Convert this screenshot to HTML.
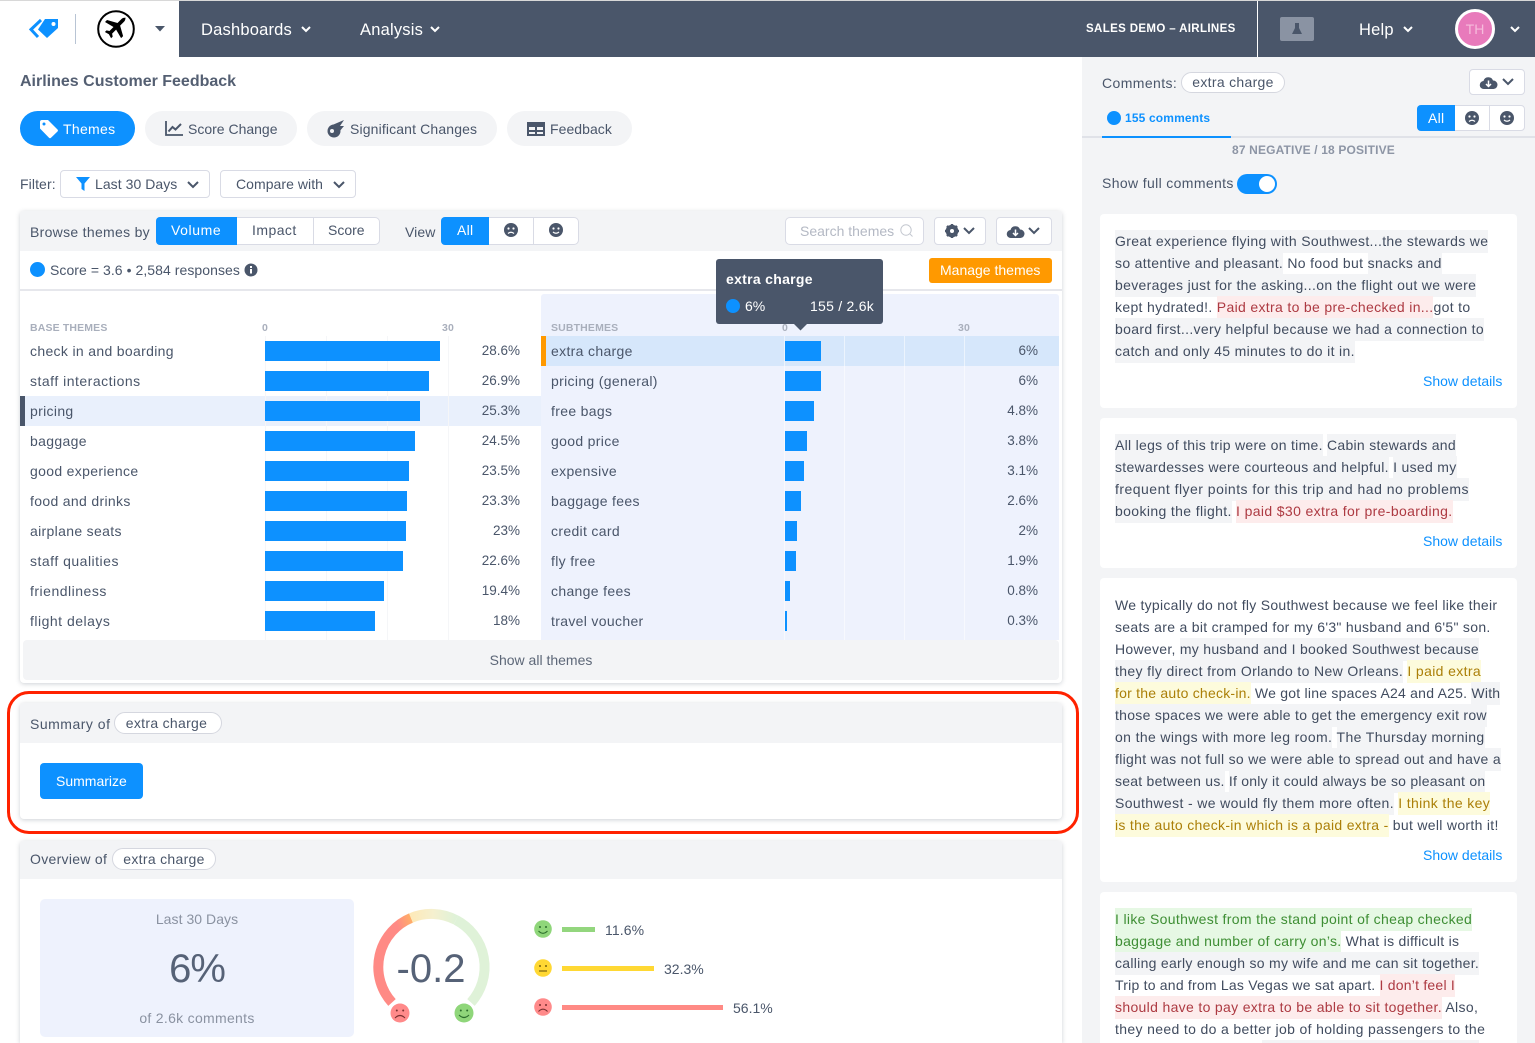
<!DOCTYPE html>
<html lang="en">
<head>
<meta charset="utf-8">
<title>Airlines Customer Feedback</title>
<style>
*{box-sizing:border-box}
html{margin:0;padding:0;width:1535px;height:1043px;overflow:hidden}
body{margin:0;padding:0;position:relative;width:1535px;height:1043px;overflow:hidden;background:#fff;font-family:"Liberation Sans",sans-serif;font-size:14px;color:#4a566a}
.a{position:absolute}
.t{position:absolute;white-space:nowrap;line-height:20px;letter-spacing:.3px}
.h{letter-spacing:0}
.pill{position:absolute;height:35px;border-radius:18px;background:#f3f4f6;top:111px}
.box{position:absolute;background:#fff;border:1px solid #d9dbe5;border-radius:4px}
.card{position:absolute;left:20px;width:1042px;background:#fff;border-radius:4px;box-shadow:0 1px 5px rgba(60,70,90,.25)}
.hd{position:absolute;left:0;top:0;width:100%;background:#f3f4f6;border-radius:4px 4px 0 0}
.tag{position:absolute;background:#fff;border:1px solid #d5d7df;border-radius:12px;text-align:center;line-height:20px;letter-spacing:.3px;white-space:nowrap}
.bar{position:absolute;height:20px;background:#0d91ff}
.rl{position:absolute;white-space:nowrap;line-height:20px;letter-spacing:.33px}
.pc{position:absolute;width:60px;text-align:right;line-height:20px;font-size:13.5px;letter-spacing:0}
.cap{position:absolute;font-size:10.5px;font-weight:bold;color:#a9afbc;line-height:14px;letter-spacing:.15px;white-space:nowrap}
.cc{position:absolute;left:1100px;width:417px;background:#fff;border-radius:4px}
.l{position:absolute;left:1115px;height:23px;line-height:22px;white-space:nowrap;letter-spacing:.33px;color:#414c5f}
.l span{display:inline-block;height:23px;vertical-align:top}
.g{background:#f3f4f6}
.r{background:#fdecec;color:#ad3a42}
.y{background:#fdfbdc;color:#ab7f08}
.n{background:#e6f8e4;color:#3e8e34}
.sd{position:absolute;left:1423px;color:#0d91ff;line-height:20px;white-space:nowrap}
svg{position:absolute;display:block;overflow:visible}
.v{position:absolute;width:1px;background:rgba(255,255,255,.55)}
</style>
</head>
<body>
<!-- top nav -->
<div class="a" style="left:0;top:0;width:1535px;height:1px;background:#d8d8d8"></div>
<div class="a" style="left:179px;top:1px;width:1356px;height:56px;background:#4a566a"></div>
<svg style="left:30px;top:18px" width="29" height="22" viewBox="0 0 29 22"><path d="M11 2 L1 11.500 L8 19" fill="none" stroke="#0d91ff" stroke-width="3"/><path d="M15 1 H28 V10 L17 20 L8 11.500 Z" fill="#0d91ff"/><circle cx="23.500" cy="6" r="2" fill="#fff"/></svg>
<div class="a" style="left:75px;top:14px;width:1px;height:30px;background:#b8c4d4"></div>
<svg style="left:97px;top:10px" width="38" height="38" viewBox="0 0 38 38"><circle cx="19" cy="19" r="17.800" fill="#fff" stroke="#000" stroke-width="2"/><path d="M29 8.500c-1.200-1.200-3.200-.8-4.500.5l-4 4-10.500-3-2 2 8.500 5-4 4-3-.6-1.600 1.600 4 2.200 2.200 4 1.600-1.600-.6-3 4-4 5 8.500 2-2-3-10.500 4-4c1.300-1.300 1.700-3.300 .9-4.600z" fill="#000"/></svg>
<svg style="left:155px;top:26px" width="10" height="6"><path d="M0 0H10L5 5.500Z" fill="#4a566a"/></svg>
<div class="t" style="left:201px;top:20px;font-size:16.500px;color:#fff;letter-spacing:.2px">Dashboards</div>
<svg style="left:301px;top:26px" width="10" height="7"><path d="M1 1L5 5L9 1" fill="none" stroke="#fff" stroke-width="2"/></svg>
<div class="t" style="left:360px;top:20px;font-size:16.500px;color:#fff;letter-spacing:.2px">Analysis</div>
<svg style="left:430px;top:26px" width="10" height="7"><path d="M1 1L5 5L9 1" fill="none" stroke="#fff" stroke-width="2"/></svg>
<div class="t" style="left:1086px;top:19px;font-size:11.500px;font-weight:bold;color:#fff;letter-spacing:.36px">SALES DEMO – AIRLINES</div>
<div class="a" style="left:1257px;top:1px;width:1px;height:56px;background:#fff"></div>
<div class="a" style="left:1280px;top:17px;width:34px;height:24px;background:#8a93a3;border-radius:2px"></div>
<svg style="left:1292px;top:23px" width="10" height="12"><path d="M3 0H7V5L10 11H0L3 5Z" fill="#4a566a"/></svg>
<div class="t" style="left:1359px;top:20px;font-size:16.500px;color:#fff;letter-spacing:.2px">Help</div>
<svg style="left:1403px;top:26px" width="10" height="7"><path d="M1 1L5 5L9 1" fill="none" stroke="#fff" stroke-width="2"/></svg>
<div class="a" style="left:1455px;top:9px;width:40px;height:40px;border-radius:50%;background:#e87abb;border:3px solid #fff;color:#f6bcdc;text-align:center;line-height:34px;font-size:14px">TH</div>
<svg style="left:1510px;top:26px" width="10" height="7"><path d="M1 1L5 5L9 1" fill="none" stroke="#fff" stroke-width="2"/></svg>

<!-- page heading -->
<div class="t" style="left:20px;top:71px;font-size:16px;font-weight:bold;color:#545f72;letter-spacing:0;top:72px">Airlines Customer Feedback</div>

<!-- tabs -->
<div class="pill" style="left:20px;width:115px;background:#0d91ff"></div>
<svg style="left:40px;top:120px" width="18" height="18" viewBox="0 0 18 18"><path d="M0 2a2 2 0 0 1 2-2H8L17.500 9.500a1.500 1.500 0 0 1 0 2L11 17.800a1.500 1.500 0 0 1-2 0L0 8.500Z" fill="#fff"/><circle cx="4" cy="4" r="1.500" fill="#0d91ff"/></svg>
<div class="t" style="left:63px;top:119px;color:#fff">Themes</div>
<div class="pill" style="left:145px;width:152px"></div>
<svg style="left:165px;top:121px" width="18" height="15" viewBox="0 0 18 15"><path d="M1 0V14H18" fill="none" stroke="#4a566a" stroke-width="1.800"/><path d="M3.500 10.500L7.500 6L10.500 8.500L16 3" fill="none" stroke="#4a566a" stroke-width="2"/></svg>
<div class="t" style="left:188px;top:119px;letter-spacing:0">Score Change</div>
<div class="pill" style="left:307px;width:190px"></div>
<svg style="left:327px;top:120px" width="18" height="18" viewBox="0 0 18 18"><circle cx="7" cy="11" r="6.500" fill="#4a566a"/><path d="M3 6L17 0L13 6L17 6L12 12Z" fill="#4a566a"/><circle cx="5" cy="11" r="2" fill="#f3f4f6"/></svg>
<div class="t" style="left:350px;top:119px;letter-spacing:.14px">Significant Changes</div>
<div class="pill" style="left:507px;width:125px"></div>
<svg style="left:527px;top:122px" width="18" height="14" viewBox="0 0 18 14"><path d="M0 0H18V14H0Z" fill="#4a566a"/><path d="M2 5H8V8H2ZM10 5H16V8H10ZM2 10H8V12H2ZM10 10H16V12H10Z" fill="#f3f4f6"/></svg>
<div class="t" style="left:550px;top:119px;letter-spacing:.05px">Feedback</div>

<!-- filter -->
<div class="t" style="left:20px;top:174px;letter-spacing:.1px">Filter:</div>
<div class="box" style="left:60px;top:170px;width:150px;height:28px"></div>
<svg style="left:76px;top:177px" width="14" height="14" viewBox="0 0 14 14"><path d="M0 0H14L8.500 6.500V14L5.500 12V6.500Z" fill="#0d91ff"/></svg>
<div class="t" style="left:95px;top:174px;letter-spacing:.05px">Last 30 Days</div>
<svg style="left:187px;top:181px" width="12" height="8"><path d="M1 1L6 6L11 1" fill="none" stroke="#4a566a" stroke-width="2"/></svg>
<div class="box" style="left:220px;top:170px;width:136px;height:28px"></div>
<div class="t" style="left:236px;top:174px;letter-spacing:.05px">Compare with</div>
<svg style="left:333px;top:181px" width="12" height="8"><path d="M1 1L6 6L11 1" fill="none" stroke="#4a566a" stroke-width="2"/></svg>

<!-- themes card -->
<div class="card" style="top:211px;height:472px"></div>
<div class="hd" style="left:20px;top:211px;width:1042px;height:40px"></div>
<div class="t" style="left:30px;top:222px">Browse themes by</div>
<div class="box" style="left:156px;top:217px;width:224px;height:28px;border-radius:5px"></div>
<div class="a" style="left:156px;top:217px;width:81px;height:28px;background:#0d91ff;border-radius:4px 0 0 4px"></div>
<div class="a" style="left:313px;top:217px;width:1px;height:28px;background:#d9dbe5"></div>
<div class="t" style="left:171px;top:220px;color:#fff;letter-spacing:.6px">Volume</div>
<div class="t" style="left:252px;top:220px;letter-spacing:.45px">Impact</div>
<div class="t" style="left:328px;top:220px;letter-spacing:0">Score</div>
<div class="t" style="left:405px;top:222px;letter-spacing:.1px">View</div>
<div class="box" style="left:441px;top:217px;width:138px;height:28px;border-radius:5px"></div>
<div class="a" style="left:441px;top:217px;width:48px;height:28px;background:#0d91ff;border-radius:4px 0 0 4px"></div>
<div class="a" style="left:533px;top:217px;width:1px;height:28px;background:#d9dbe5"></div>
<div class="t" style="left:457px;top:220px;color:#fff">All</div>
<svg style="left:504px;top:223px" width="14" height="14" viewBox="0 0 14 14"><circle cx="7" cy="7" r="7" fill="#4a566a"/><circle cx="4.500" cy="5.500" r="1.100" fill="#fff"/><circle cx="9.500" cy="5.500" r="1.100" fill="#fff"/><path d="M4 10.500Q7 8 10 10.500" fill="none" stroke="#fff" stroke-width="1.200"/></svg>
<svg style="left:549px;top:223px" width="14" height="14" viewBox="0 0 14 14"><circle cx="7" cy="7" r="7" fill="#4a566a"/><circle cx="4.500" cy="5.500" r="1.100" fill="#fff"/><circle cx="9.500" cy="5.500" r="1.100" fill="#fff"/><path d="M4 9Q7 11.500 10 9" fill="none" stroke="#fff" stroke-width="1.200"/></svg>
<div class="box" style="left:785px;top:217px;width:139px;height:28px;border-radius:5px"></div>
<div class="t h" style="left:800px;top:221px;color:#b4b9c4">Search themes</div>
<svg style="left:900px;top:224px" width="13" height="13" viewBox="0 0 13 13"><circle cx="6" cy="6" r="5.200" fill="none" stroke="#c4c8d0" stroke-width="1"/><path d="M10 10L12.500 12.500" stroke="#c4c8d0"/></svg>
<div class="box" style="left:934px;top:217px;width:52px;height:28px"></div>
<svg style="left:945px;top:224px" width="14" height="14" viewBox="0 0 14 14"><circle cx="7" cy="7" r="4.800" fill="none" stroke="#4a566a" stroke-width="3"/><path d="M7 0V14M0 7H14M2 2L12 12M12 2L2 12" stroke="#4a566a" stroke-width="2.400"/><circle cx="7" cy="7" r="2" fill="#fff"/></svg>
<svg style="left:963px;top:227px" width="12" height="8"><path d="M1 1L6 6L11 1" fill="none" stroke="#4a566a" stroke-width="2"/></svg>
<div class="box" style="left:996px;top:217px;width:56px;height:28px"></div>
<svg style="left:1007px;top:225px" width="17" height="13" viewBox="0 0 17 13"><path d="M4 13A4 4 0 0 1 3.500 5 5 5 0 0 1 13 4.500 4.200 4.200 0 0 1 13.500 13Z" fill="#4a566a"/><path d="M8.500 4.500V10M6 8L8.500 10.500L11 8" fill="none" stroke="#fff" stroke-width="1.500"/></svg>
<svg style="left:1028px;top:227px" width="12" height="8"><path d="M1 1L6 6L11 1" fill="none" stroke="#4a566a" stroke-width="2"/></svg>

<div class="a" style="left:30px;top:262px;width:15px;height:15px;border-radius:50%;background:#0d91ff"></div>
<div class="t" style="left:50px;top:260px;letter-spacing:.06px">Score = 3.6 • 2,584 responses</div>
<svg style="left:244px;top:263px" width="14" height="14" viewBox="0 0 14 14"><circle cx="7" cy="7" r="6.500" fill="#4a566a"/><rect x="6" y="6" width="2" height="4.500" fill="#fff"/><rect x="6" y="3" width="2" height="2" fill="#fff"/></svg>
<div class="a" style="left:20px;top:289px;width:1042px;height:2px;background:#e6e7ec"></div>
<div class="a" style="left:929px;top:258px;width:123px;height:25px;background:#ff9900;border-radius:3px"></div>
<div class="t h" style="left:940px;top:260px;color:#fff">Manage themes</div>

<!-- left chart -->
<div class="a" style="left:20px;top:396px;width:521px;height:30px;background:#e9f0fc"></div>
<div class="a" style="left:20px;top:396px;width:5px;height:30px;background:#4a566a"></div>
<div class="a" style="left:265px;top:336px;width:1px;height:304px;background:#f5f6f8"></div>
<div class="a" style="left:326px;top:336px;width:1px;height:304px;background:#f5f6f8"></div>
<div class="a" style="left:387px;top:336px;width:1px;height:304px;background:#f5f6f8"></div>
<div class="a" style="left:448px;top:336px;width:1px;height:304px;background:#f5f6f8"></div>
<div class="cap" style="left:30px;top:321px">BASE THEMES</div>
<div class="cap" style="left:262px;top:321px">0</div>
<div class="cap" style="left:442px;top:321px">30</div>
<div class="rl" style="left:30px;top:341px">check in and boarding</div>
<div class="rl" style="left:30px;top:371px;letter-spacing:.5px">staff interactions</div>
<div class="rl" style="left:30px;top:401px">pricing</div>
<div class="rl" style="left:30px;top:431px">baggage</div>
<div class="rl" style="left:30px;top:461px">good experience</div>
<div class="rl" style="left:30px;top:491px">food and drinks</div>
<div class="rl" style="left:30px;top:521px">airplane seats</div>
<div class="rl" style="left:30px;top:551px;letter-spacing:.5px">staff qualities</div>
<div class="rl" style="left:30px;top:581px;letter-spacing:.5px">friendliness</div>
<div class="rl" style="left:30px;top:611px;letter-spacing:.5px">flight delays</div>
<div class="bar" style="left:265px;top:341px;width:175px"></div>
<div class="bar" style="left:265px;top:371px;width:164px"></div>
<div class="bar" style="left:265px;top:401px;width:155px"></div>
<div class="bar" style="left:265px;top:431px;width:150px"></div>
<div class="bar" style="left:265px;top:461px;width:144px"></div>
<div class="bar" style="left:265px;top:491px;width:142px"></div>
<div class="bar" style="left:265px;top:521px;width:141px"></div>
<div class="bar" style="left:265px;top:551px;width:138px"></div>
<div class="bar" style="left:265px;top:581px;width:119px"></div>
<div class="bar" style="left:265px;top:611px;width:110px"></div>
<div class="pc" style="left:460px;top:341px">28.6%</div>
<div class="pc" style="left:460px;top:371px">26.9%</div>
<div class="pc" style="left:460px;top:401px">25.3%</div>
<div class="pc" style="left:460px;top:431px">24.5%</div>
<div class="pc" style="left:460px;top:461px">23.5%</div>
<div class="pc" style="left:460px;top:491px">23.3%</div>
<div class="pc" style="left:460px;top:521px">23%</div>
<div class="pc" style="left:460px;top:551px">22.6%</div>
<div class="pc" style="left:460px;top:581px">19.4%</div>
<div class="pc" style="left:460px;top:611px">18%</div>

<!-- right chart -->
<div class="a" style="left:541px;top:294px;width:518px;height:346px;background:#eef2fd;border-radius:3px 3px 0 0"></div>
<div class="a" style="left:541px;top:336px;width:518px;height:30px;background:#d6e7fb"></div>
<div class="a" style="left:541px;top:336px;width:5px;height:30px;background:#ff9900"></div>
<div class="v" style="left:784px;top:336px;height:304px"></div>
<div class="v" style="left:844px;top:336px;height:304px"></div>
<div class="v" style="left:904px;top:336px;height:304px"></div>
<div class="v" style="left:964px;top:336px;height:304px"></div>
<div class="cap" style="left:551px;top:321px">SUBTHEMES</div>
<div class="cap" style="left:782px;top:321px">0</div>
<div class="cap" style="left:958px;top:321px">30</div>
<div class="rl" style="left:551px;top:341px">extra charge</div>
<div class="rl" style="left:551px;top:371px">pricing (general)</div>
<div class="rl" style="left:551px;top:401px">free bags</div>
<div class="rl" style="left:551px;top:431px">good price</div>
<div class="rl" style="left:551px;top:461px">expensive</div>
<div class="rl" style="left:551px;top:491px">baggage fees</div>
<div class="rl" style="left:551px;top:521px">credit card</div>
<div class="rl" style="left:551px;top:551px">fly free</div>
<div class="rl" style="left:551px;top:581px">change fees</div>
<div class="rl" style="left:551px;top:611px">travel voucher</div>
<div class="bar" style="left:785px;top:341px;width:36px"></div>
<div class="bar" style="left:785px;top:371px;width:36px"></div>
<div class="bar" style="left:785px;top:401px;width:29px"></div>
<div class="bar" style="left:785px;top:431px;width:22px"></div>
<div class="bar" style="left:785px;top:461px;width:19px"></div>
<div class="bar" style="left:785px;top:491px;width:16px"></div>
<div class="bar" style="left:785px;top:521px;width:12px"></div>
<div class="bar" style="left:785px;top:551px;width:11px"></div>
<div class="bar" style="left:785px;top:581px;width:5px"></div>
<div class="bar" style="left:785px;top:611px;width:2px"></div>
<div class="pc" style="left:978px;top:341px">6%</div>
<div class="pc" style="left:978px;top:371px">6%</div>
<div class="pc" style="left:978px;top:401px">4.8%</div>
<div class="pc" style="left:978px;top:431px">3.8%</div>
<div class="pc" style="left:978px;top:461px">3.1%</div>
<div class="pc" style="left:978px;top:491px">2.6%</div>
<div class="pc" style="left:978px;top:521px">2%</div>
<div class="pc" style="left:978px;top:551px">1.9%</div>
<div class="pc" style="left:978px;top:581px">0.8%</div>
<div class="pc" style="left:978px;top:611px">0.3%</div>

<!-- tooltip -->
<div class="a" style="left:716px;top:259px;width:167px;height:65px;background:#4a566a;border-radius:3px"></div>
<svg style="left:794px;top:324px" width="13" height="7"><path d="M0 0H13L6.500 6.500Z" fill="#4a566a"/></svg>
<div class="t" style="left:726px;top:269px;color:#fff;font-weight:bold;letter-spacing:.3px">extra charge</div>
<div class="a" style="left:726px;top:299px;width:14px;height:14px;border-radius:50%;background:#0d91ff"></div>
<div class="t" style="left:745px;top:296px;color:#fff;letter-spacing:0">6%</div>
<div class="t" style="left:810px;top:296px;color:#fff;letter-spacing:.25px">155 / 2.6k</div>

<div class="a" style="left:23px;top:640px;width:1036px;height:40px;background:#f3f4f6;border-radius:4px"></div>
<div class="t h" style="left:23px;top:650px;width:1036px;text-align:center;color:#5d6778">Show all themes</div>

<!-- red outline -->
<div class="a" style="left:7px;top:691px;width:1072px;height:143px;border:3px solid #ff2200;border-radius:22px"></div>

<!-- summary card -->
<div class="card" style="top:703px;height:116px"></div>
<div class="hd" style="left:20px;top:703px;width:1042px;height:40px"></div>
<div class="t" style="left:30px;top:714px;letter-spacing:.5px">Summary of</div>
<div class="tag" style="left:114px;top:712px;width:108px;height:22px;padding-right:3px">extra charge</div>
<div class="a" style="left:40px;top:763px;width:103px;height:36px;background:#0d91ff;border-radius:4px"></div>
<div class="t h" style="left:56px;top:771px;color:#fff">Summarize</div>

<!-- overview card -->
<div class="card" style="top:841px;height:202px;border-radius:4px 4px 0 0"></div>
<div class="hd" style="left:20px;top:841px;width:1042px;height:38px"></div>
<div class="t" style="left:30px;top:849px">Overview of</div>
<div class="tag" style="left:112px;top:848px;width:104px;height:22px">extra charge</div>
<div class="a" style="left:40px;top:899px;width:314px;height:138px;background:#eef2fd;border-radius:5px"></div>
<div class="t" style="left:40px;top:909px;width:314px;text-align:center;color:#8a92a1;letter-spacing:.05px">Last 30 Days</div>
<div class="t" style="left:40px;top:944px;width:314px;text-align:center;font-size:40px;line-height:50px;letter-spacing:-1px;color:#566277">6%</div>
<div class="t" style="left:40px;top:1008px;width:314px;text-align:center;color:#8a92a1">of 2.6k comments</div>

<svg style="left:360px;top:895px" width="150" height="148" viewBox="0 0 150 148">
<defs>
<linearGradient id="gp" x1="0" y1="0" x2="1" y2="0"><stop offset="0" stop-color="#fde9b8"/><stop offset=".5" stop-color="#f5f0cf"/><stop offset="1" stop-color="#dff2d8"/></linearGradient>
<linearGradient id="rp" x1="0" y1="1" x2="1" y2="0"><stop offset=".75" stop-color="#ff8a85"/><stop offset="1" stop-color="#ffae68"/></linearGradient>
</defs>
<path d="M32 107.500 A53 53 0 0 1 51 23" fill="none" stroke="url(#rp)" stroke-width="10"/>
<path d="M51 23 A53 53 0 0 1 96 25" fill="none" stroke="url(#gp)" stroke-width="10"/>
<path d="M96 25 A53 53 0 0 1 111 107.500" fill="none" stroke="#dff2d8" stroke-width="10"/>
<circle cx="40" cy="118" r="9.500" fill="#ff8a8a"/>
<circle cx="36.800" cy="115.500" r="1" fill="#7a3030"/><circle cx="43.200" cy="115.500" r="1" fill="#7a3030"/>
<path d="M35 123Q40 118 45 123" fill="none" stroke="#7a3030" stroke-width="1.100"/>
<circle cx="104" cy="118" r="9.500" fill="#8fd67a"/>
<circle cx="100.800" cy="115.500" r="1" fill="#2c6e2c"/><circle cx="107.200" cy="115.500" r="1" fill="#2c6e2c"/>
<path d="M99 120Q104 125 109 120" fill="none" stroke="#2c6e2c" stroke-width="1.100"/>
</svg>
<div class="t" style="left:366px;top:944px;width:130px;text-align:center;font-size:40px;line-height:50px;letter-spacing:0;color:#566277">-0.2</div>

<svg style="left:534px;top:920px" width="18" height="18" viewBox="0 0 18 18"><circle cx="9" cy="9" r="8.800" fill="#8fd67a"/><circle cx="6" cy="7" r="1" fill="#2c6e2c"/><circle cx="12" cy="7" r="1" fill="#2c6e2c"/><path d="M4.500 11Q9 15.500 13.500 11" fill="none" stroke="#2c6e2c" stroke-width="1.100"/></svg>
<div class="a" style="left:562px;top:927px;width:33px;height:5px;background:#93d67e"></div>
<div class="t" style="left:605px;top:920px;letter-spacing:.1px">11.6%</div>
<svg style="left:534px;top:959px" width="18" height="18" viewBox="0 0 18 18"><circle cx="9" cy="9" r="8.800" fill="#ffd833"/><circle cx="6" cy="7" r="1" fill="#7a6410"/><circle cx="12" cy="7" r="1" fill="#7a6410"/><path d="M5 12H13" fill="none" stroke="#7a6410" stroke-width="1.200"/></svg>
<div class="a" style="left:562px;top:966px;width:92px;height:5px;background:#ffd833"></div>
<div class="t" style="left:664px;top:959px;letter-spacing:0">32.3%</div>
<svg style="left:534px;top:998px" width="18" height="18" viewBox="0 0 18 18"><circle cx="9" cy="9" r="8.800" fill="#ff8a8a"/><circle cx="6" cy="7" r="1" fill="#7a3030"/><circle cx="12" cy="7" r="1" fill="#7a3030"/><path d="M4.500 13.500Q9 9 13.500 13.500" fill="none" stroke="#7a3030" stroke-width="1.100"/></svg>
<div class="a" style="left:562px;top:1005px;width:161px;height:5px;background:#ff8a85"></div>
<div class="t" style="left:733px;top:998px;letter-spacing:0">56.1%</div>

<!-- comments panel -->
<div class="a" style="left:1082px;top:57px;width:453px;height:986px;background:#f3f4f6"></div>
<div class="t" style="left:1102px;top:73px;letter-spacing:.4px">Comments:</div>
<div class="tag" style="left:1181px;top:72px;width:104px;height:21px;line-height:19px">extra charge</div>
<div class="box" style="left:1469px;top:69px;width:56px;height:26px"></div>
<svg style="left:1480px;top:76px" width="17" height="13" viewBox="0 0 17 13"><path d="M4 13A4 4 0 0 1 3.500 5 5 5 0 0 1 13 4.500 4.200 4.200 0 0 1 13.500 13Z" fill="#4a566a"/><path d="M8.500 4.500V10M6 8L8.500 10.500L11 8" fill="none" stroke="#fff" stroke-width="1.500"/></svg>
<svg style="left:1502px;top:78px" width="12" height="8"><path d="M1 1L6 6L11 1" fill="none" stroke="#4a566a" stroke-width="2"/></svg>
<div class="a" style="left:1107px;top:111px;width:14px;height:14px;border-radius:50%;background:#0d91ff"></div>
<div class="t" style="left:1125px;top:108px;font-size:12px;font-weight:bold;color:#0d91ff;letter-spacing:.15px">155 comments</div>
<div class="box" style="left:1417px;top:105px;width:108px;height:26px"></div>
<div class="a" style="left:1417px;top:105px;width:38px;height:26px;background:#0d91ff;border-radius:4px 0 0 4px"></div>
<div class="a" style="left:1489px;top:105px;width:1px;height:26px;background:#d9dbe5"></div>
<div class="t" style="left:1428px;top:108px;color:#fff">All</div>
<svg style="left:1465px;top:111px" width="14" height="14" viewBox="0 0 14 14"><circle cx="7" cy="7" r="7" fill="#4a566a"/><circle cx="4.500" cy="5.500" r="1.100" fill="#fff"/><circle cx="9.500" cy="5.500" r="1.100" fill="#fff"/><path d="M4 10.500Q7 8 10 10.500" fill="none" stroke="#fff" stroke-width="1.200"/></svg>
<svg style="left:1500px;top:111px" width="14" height="14" viewBox="0 0 14 14"><circle cx="7" cy="7" r="7" fill="#4a566a"/><circle cx="4.500" cy="5.500" r="1.100" fill="#fff"/><circle cx="9.500" cy="5.500" r="1.100" fill="#fff"/><path d="M4 9Q7 11.500 10 9" fill="none" stroke="#fff" stroke-width="1.200"/></svg>
<div class="a" style="left:1082px;top:136px;width:453px;height:2px;background:#e0e2e8"></div>
<div class="a" style="left:1102px;top:136px;width:129px;height:2px;background:#0d91ff"></div>
<div class="t" style="left:1232px;top:140px;font-size:12px;font-weight:bold;color:#8d95a5;letter-spacing:.15px">87 NEGATIVE / 18 POSITIVE</div>
<div class="t" style="left:1102px;top:173px;letter-spacing:.36px">Show full comments</div>
<div class="a" style="left:1237px;top:174px;width:40px;height:20px;border-radius:10px;background:#0d91ff"></div>
<div class="a" style="left:1259px;top:176px;width:16px;height:16px;border-radius:50%;background:#fff"></div>

<!-- comment 1 -->
<div class="cc" style="top:214px;height:194px"></div>
<div class="l" style="top:230px"><span class="g">Great experience flying with Southwest...the stewards we</span></div>
<div class="l" style="top:252px"><span class="g">so attentive and pleasant.</span> No food but <span class="g">snacks and</span></div>
<div class="l" style="top:274px"><span class="g">beverages just for the asking...on the flight out we were</span></div>
<div class="l" style="top:296px">kept hydrated!. <span class="r">Paid extra to be pre-checked in...</span>got to</div>
<div class="l" style="top:318px"><span class="g">board first...very helpful because we had a connection to</span></div>
<div class="l" style="top:340px"><span class="g">catch and only 45 minutes to do it in.</span></div>
<div class="sd h" style="top:371px">Show details</div>

<!-- comment 2 -->
<div class="cc" style="top:418px;height:150px"></div>
<div class="l" style="top:434px;letter-spacing:.29px"><span class="g">All legs of this trip were on time.</span> <span class="g">Cabin stewards and</span></div>
<div class="l" style="top:456px;letter-spacing:.31px"><span class="g">stewardesses were courteous and helpful.</span> <span class="g">I used my</span></div>
<div class="l" style="top:478px;letter-spacing:.48px"><span class="g">frequent flyer points for this trip and had no problems</span></div>
<div class="l" style="top:500px;letter-spacing:.37px"><span class="g">booking the flight.</span> <span class="r">I paid $30 extra for pre-boarding.</span></div>
<div class="sd h" style="top:531px">Show details</div>

<!-- comment 3 -->
<div class="cc" style="top:578px;height:304px"></div>
<div class="l" style="top:594px;letter-spacing:.28px">We typically do not fly Southwest because we feel like their</div>
<div class="l" style="top:616px;letter-spacing:.3px">seats are a bit cramped for my 6'3" husband and 6'5" son.</div>
<div class="l" style="top:638px;letter-spacing:.29px">However, <span class="g">my husband and I booked Southwest because</span></div>
<div class="l" style="top:660px;letter-spacing:.36px"><span class="g">they fly direct from Orlando to New Orleans.</span> <span class="y">I paid extra</span></div>
<div class="l" style="top:682px;letter-spacing:.23px"><span class="y">for the auto check-in.</span> We got line spaces A24 and A25. <span class="g">With</span></div>
<div class="l" style="top:704px;letter-spacing:.28px"><span class="g">those spaces we were able to get the emergency exit row</span></div>
<div class="l" style="top:726px;letter-spacing:.37px"><span class="g">on the wings with more leg room.</span> <span class="g">The Thursday morning</span></div>
<div class="l" style="top:748px;letter-spacing:.31px"><span class="g">flight was not full so we were able to spread out and have a</span></div>
<div class="l" style="top:770px;letter-spacing:.24px"><span class="g">seat between us.</span> <span class="g">If only it could always be so pleasant on</span></div>
<div class="l" style="top:792px;letter-spacing:.37px"><span class="g">Southwest - we would fly them more often.</span> <span class="y">I think the key</span></div>
<div class="l" style="top:814px;letter-spacing:.31px"><span class="y">is the auto check-in which is a paid extra -</span> but well worth it!</div>
<div class="sd h" style="top:845px">Show details</div>

<!-- comment 4 -->
<div class="cc" style="top:892px;height:151px;border-radius:4px 4px 0 0"></div>
<div class="l" style="top:908px"><span class="n">I like Southwest from the stand point of cheap checked</span></div>
<div class="l" style="top:930px;letter-spacing:.29px"><span class="n">baggage and number of carry on’s.</span> What is difficult is</div>
<div class="l" style="top:952px;letter-spacing:.29px"><span class="g">calling early enough so my wife and me can sit together.</span></div>
<div class="l" style="top:974px;letter-spacing:.22px">Trip to and from Las Vegas we sat apart. <span class="r">I don’t feel I</span></div>
<div class="l" style="top:996px"><span class="r">should have to pay extra to be able to sit together.</span> Also,</div>
<div class="l" style="top:1018px;letter-spacing:.35px">they need to do a better job of holding passengers to the</div>
<div class="a" style="left:1262px;top:1040px;width:217px;height:3px;background:#f3f4f6"></div>
</body>
</html>
